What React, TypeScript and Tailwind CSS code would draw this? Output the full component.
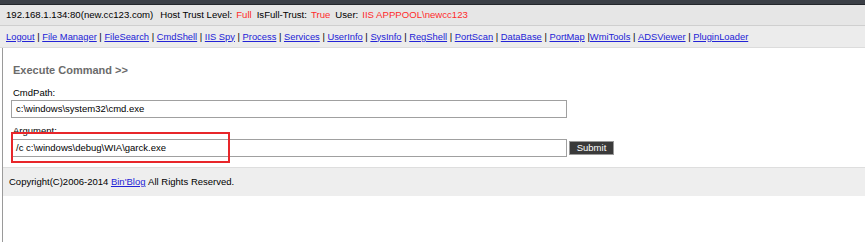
import React from "react";

const links = [
  "Logout",
  "File Manager",
  "FileSearch",
  "CmdShell",
  "IIS Spy",
  "Process",
  "Services",
  "UserInfo",
  "SysInfo",
  "RegShell",
  "PortScan",
  "DataBase",
  "PortMap",
  "WmiTools",
  "ADSViewer",
  "PluginLoader",
];

export default function App() {
  return (
    <div className="w-[865px] h-[242px] bg-white overflow-hidden text-[9.5px] leading-[12px] text-black" style={{ fontFamily: '"Liberation Sans", Arial, sans-serif' }}>
      <div className="h-[5px] bg-[#3b3f46] border-b border-[#23262b]" />
      <div className="h-[21px] bg-[#e6e6e6] border-b border-[#cfcfcf] flex items-center pl-[6px] text-[9.6px]">
        <span>192.168.1.134:80(new.cc123.com)</span>
        <span className="ml-[7px]">Host Trust Level:</span>
        <span className="ml-[4px] text-[#ff2a2a]">Full</span>
        <span className="ml-[5px]">IsFull-Trust:</span>
        <span className="ml-[4px] text-[#ff2a2a]">True</span>
        <span className="ml-[5px]">User:</span>
        <span className="ml-[4px] text-[#ff2a2a]">IIS APPPOOL\newcc123</span>
      </div>
      <div className="h-[22px] bg-[#ececec] border-b border-[#dcdcdc] flex items-center pl-[6px] whitespace-pre text-[9.35px]">
        {links.map((l, i) => (
          <React.Fragment key={l}>
            {i > 0 && <span className="whitespace-pre">{l === "WmiTools" ? " |" : " | "}</span>}
            <a className="text-[#2323d6] underline whitespace-pre">{l}</a>
          </React.Fragment>
        ))}
      </div>
      <div className="ml-[2px] border-l border-[#9a9a9a] h-[200px]">
        <div className="pl-[8px] pt-[15px]">
          <div className="pl-[2px] font-bold text-[11px] leading-[14px] text-[#6b6b6b]">Execute Command &gt;&gt;</div>
          <div className="pl-[2px] mt-[10px] h-[12px]">CmdPath:</div>
          <div className="mt-[1px] w-[556px] h-[18px] border border-[#a0a0a0] flex items-center pl-[4px]">c:\windows\system32\cmd.exe</div>
          <div className="relative mt-[7px]">
            <div className="pl-[2px] h-[12px]">Argument:</div>
            <div className="flex items-center mt-[2px]">
              <div className="w-[556px] h-[18px] border border-[#a0a0a0] flex items-center pl-[4px]">/c c:\windows\debug\WIA\garck.exe</div>
              <div className="ml-[2px] h-[14px] w-[45px] bg-[#3a3a3a] border border-[#9a9a9a] text-white flex items-center justify-center">Submit</div>
            </div>
            <div className="absolute left-0 top-[7px] w-[219px] h-[31px] border-2 border-[#e8262a]" />
          </div>
        </div>
        <div className="mt-[10px] h-[29px] bg-[#eeeeee] border-t border-[#dedede] flex items-center pl-[6px]">
          Copyright(C)2006-2014&nbsp;<a className="text-[#2323d6] underline">Bin'Blog</a>&nbsp;All Rights Reserved.
        </div>
      </div>
    </div>
  );
}
